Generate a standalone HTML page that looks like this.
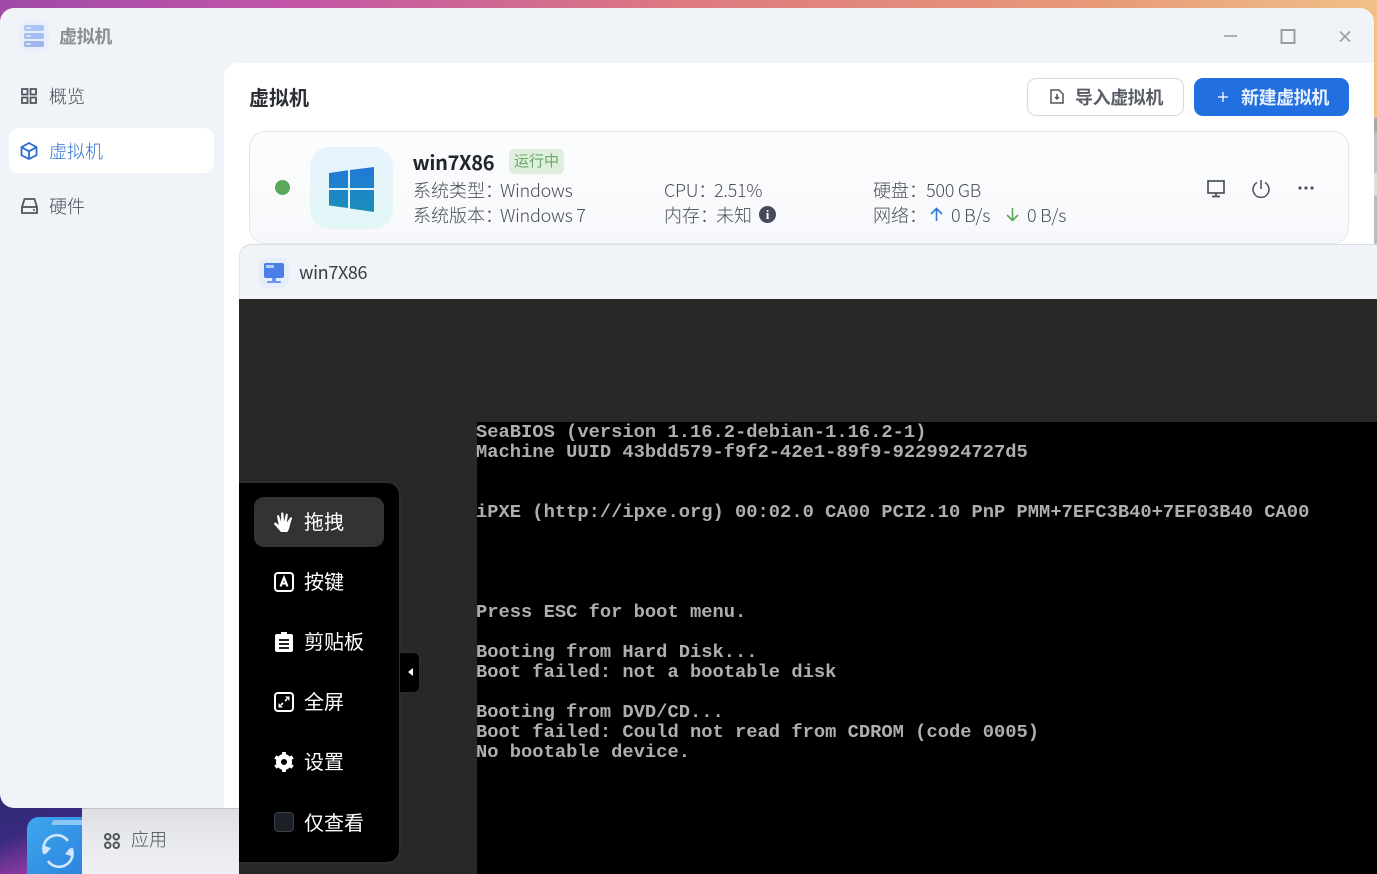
<!DOCTYPE html>
<html><head><meta charset="utf-8"><style>
*{box-sizing:border-box;margin:0;padding:0}
html,body{width:1377px;height:874px;overflow:hidden}
body{position:relative;font-family:"Noto Sans CJK SC","Liberation Sans",sans-serif;background:#eef0f5}
.a{position:absolute;white-space:nowrap}
.wall{left:0;top:0;width:1377px;height:874px;background:linear-gradient(90deg,#a04aa8 0,#c055a8 20%,#dd7a80 50%,#e89a78 80%,#f0c088 100%)}
.win{left:0;top:8px;width:1374px;height:800px;background:#f0f3f8;border-radius:14px}
.main{left:224px;top:63px;width:1150px;height:745px;background:#fff;border-radius:14px 0 0 0}
.t{font-size:18px;line-height:24px;color:#4a4f57;font-weight:300;margin-top:1px;letter-spacing:-.25px}
.card{left:249px;top:131px;width:1100px;height:113px;border:1px solid #e3e6ec;border-radius:16px;background:linear-gradient(#fbfcfe,#f9fafc 75%,#f6f7fa)}
.mono{font-family:"Liberation Mono",monospace;font-size:18.77px;line-height:20px;color:#aeaeae;font-weight:bold;left:476px;margin-top:1px}
.m{font-size:20px;line-height:28px;color:#fff;left:304px;margin-top:1px;font-family:"Liberation Sans","Noto Sans CJK SC",sans-serif}
.b{font-size:18px;line-height:24px;font-weight:bold;letter-spacing:-.4px;font-family:"Liberation Sans","Noto Sans CJK SC",sans-serif}
svg{position:absolute;overflow:visible}
</style></head><body>
<div class="a wall"></div>
<div class="a" style="left:1374px;top:118px;width:3px;height:126px;background:linear-gradient(#a8a8a8 0,#a8a8a8 11%,#bcc0c8 12%,#bcc0c8 43%,#e0e0e0 44%,#e0e0e0 61%,#b8bcc4 62%)"></div>
<!-- desktop bottom-left -->
<div class="a" style="left:0;top:790px;width:82px;height:84px;background:linear-gradient(160deg,#2a2a70 0,#3a2a80 45%,#8a3aa0 80%,#a040a8 100%)"></div>
<div class="a" style="left:27px;top:817px;width:60px;height:60px;background:linear-gradient(135deg,#3fa8ee,#2b80dc);border-radius:12px 0 0 0"></div>
<div class="a" style="left:52px;top:820px;width:30px;height:5px;background:#8cc6f2;border-radius:3px 0 0 0"></div>
<svg style="left:42px;top:835px" width="32" height="32" viewBox="0 0 32 32" fill="none" stroke="#cfe6fb" stroke-width="2.600"><path d="M2.500 19A13.500 13.500 0 0 1 26 6"/><path d="M29.500 13A13.500 13.500 0 0 1 6 26"/><path d="M0 10l4 9 5-6z" fill="#cfe6fb" stroke="none"/><path d="M32 22l-4-9-5 6z" fill="#cfe6fb" stroke="none"/></svg>
<div class="a" style="left:82px;top:808px;width:158px;height:66px;background:linear-gradient(#dcdee3,#e8eaef 50%,#eef0f5);border-top:1px solid #bfc1c6"></div>
<svg style="left:104px;top:833px" width="16" height="16" viewBox="0 0 16 16" fill="none" stroke="#50545c" stroke-width="2"><rect x="1" y="1" width="5.500" height="5.500" rx="2.700"/><rect x="9.500" y="1" width="5.500" height="5.500" rx="2.700"/><rect x="1" y="9.500" width="5.500" height="5.500" rx="2.700"/><rect x="9.500" y="9.500" width="5.500" height="5.500" rx="2.700"/></svg>
<div class="a t" style="left:131px;top:826px;color:#50545c;letter-spacing:0">应用</div>

<div class="a win"></div>
<!-- header -->
<div class="a" style="left:19px;top:21px;width:30px;height:30px;background:#e9effa;border-radius:8px"></div>
<div class="a" style="left:24px;top:25px;width:20px;height:6px;background:#a9c4f5;border-radius:2px"></div>
<div class="a" style="left:24px;top:33px;width:20px;height:6px;background:#a4bcf2;border-radius:2px"></div>
<div class="a" style="left:24px;top:41px;width:20px;height:6px;background:#a0b4ee;border-radius:2px"></div>
<div class="a" style="left:26px;top:27px;width:5px;height:2px;background:#cfe3f5"></div>
<div class="a" style="left:26px;top:35px;width:5px;height:2px;background:#cfe3f5"></div>
<div class="a" style="left:26px;top:43px;width:5px;height:2px;background:#cfe3f5"></div>
<div class="a b" style="left:59px;top:25px;color:#8a8d92;letter-spacing:-.3px">虚拟机</div>
<svg style="left:1223px;top:29px" width="130" height="16" viewBox="0 0 130 16" fill="none" stroke="#9a9da3" stroke-width="1.600"><path d="M1 7h13"/><rect x="58.500" y="1" width="13" height="13" stroke-width="2"/><path d="M117 2.500l10 10M127 2.500l-10 10"/></svg>
<!-- sidebar -->
<svg style="left:21px;top:88px" width="16" height="16" viewBox="0 0 16 16" fill="none" stroke="#55585f" stroke-width="1.800"><rect x="1" y="1" width="5.500" height="5.500"/><rect x="9.500" y="1" width="5.500" height="5.500"/><rect x="1" y="9.500" width="5.500" height="5.500"/><rect x="9.500" y="9.500" width="5.500" height="5.500"/></svg>
<div class="a t" style="left:49px;top:83px;letter-spacing:0">概览</div>
<div class="a" style="left:9px;top:128px;width:205px;height:45px;background:#fff;border-radius:10px"></div>
<svg style="left:20px;top:142px" width="18" height="18" viewBox="0 0 18 18" fill="none" stroke="#2a6fd0" stroke-width="1.800"><path d="M9 1l7.500 4.200v8L9 17l-7.500-3.800v-8z"/><path d="M1.500 5.200L9 9.300l7.500-4.100M9 9.300V17"/></svg>
<div class="a t" style="left:49px;top:138px;color:#2f74d0;letter-spacing:0">虚拟机</div>
<svg style="left:21px;top:198px" width="17" height="16" viewBox="0 0 17 16" fill="none" stroke="#50545c" stroke-width="1.800"><path d="M1 9L3.500 1h10L16 9v6H1z"/><path d="M1 9h15"/><path d="M12 12h2" stroke-width="1.500"/></svg>
<div class="a t" style="left:49px;top:193px;letter-spacing:0">硬件</div>
<!-- main -->
<div class="a main"></div>
<div class="a" style="left:249px;top:87px;font-size:20px;line-height:24px;font-weight:bold;color:#2b2e33;font-family:'Liberation Sans','Noto Sans CJK SC',sans-serif">虚拟机</div>
<div class="a" style="left:1027px;top:78px;width:157px;height:38px;border:1px solid #d5d9e0;border-radius:9px;background:#fff"></div>
<svg style="left:1050px;top:89px" width="14" height="16" viewBox="0 0 14 16" fill="none" stroke="#50545c" stroke-width="1.500"><path d="M1 1h8l4 4v9H1z"/><path d="M7 5v5M5 8l2 2 2-2"/></svg>
<div class="a b" style="left:1075px;top:86px;color:#5a5e66">导入虚拟机</div>
<div class="a" style="left:1194px;top:78px;width:155px;height:38px;border-radius:9px;background:#2270e0"></div>
<svg style="left:1217px;top:91px" width="12" height="12" viewBox="0 0 12 12" stroke="#fff" stroke-width="1.300"><path d="M6 1v10M1 6h10"/></svg>
<div class="a b" style="left:1241px;top:86px;color:#e8f0fc">新建虚拟机</div>
<!-- card -->
<div class="a card"></div>
<div class="a" style="left:275px;top:180px;width:15px;height:15px;border-radius:50%;background:#5aa85a"></div>
<div class="a" style="left:310px;top:147px;width:83px;height:82px;border-radius:20px;background:linear-gradient(#e8f3fd,#e2f7f6)"></div>
<svg style="left:329px;top:167px" width="46" height="45" viewBox="0 0 46 45"><defs><linearGradient id="w" x1="0" y1="0" x2="0" y2="1"><stop offset="0" stop-color="#2278da"/><stop offset="1" stop-color="#1a90b8"/></linearGradient></defs><path d="M0 6l19-2.800V21H0zM21 3L45 0v21H21zM0 23h19v18L0 38.500zM21 23h24v22l-24-3.500z" fill="url(#w)"/></svg>
<div class="a" style="left:412.500px;top:149px;font-size:20px;line-height:26px;font-weight:bold;color:#22252a;font-family:'Noto Sans CJK SC',sans-serif;letter-spacing:-.35px">win7X86</div>
<div class="a" style="left:509px;top:149px;width:55px;height:25px;border-radius:5px;background:#e0eedd;color:#66a866;font-size:15px;line-height:25px;text-align:center;font-family:'Liberation Sans','Noto Sans CJK SC',sans-serif">运行中</div>
<div class="a t" style="left:413px;top:177px;letter-spacing:0">系统类型：</div><div class="a t" style="left:500px;top:177px">Windows</div>
<div class="a t" style="left:413px;top:202px;letter-spacing:0">系统版本：</div><div class="a t" style="left:500px;top:202px">Windows 7</div>
<div class="a t" style="left:664px;top:177px">CPU：</div><div class="a t" style="left:714px;top:177px">2.51%</div>
<div class="a t" style="left:664px;top:202px;letter-spacing:0">内存：</div><div class="a t" style="left:716px;top:202px;letter-spacing:0">未知</div>
<div class="a" style="left:759px;top:206px;width:17px;height:17px;border-radius:50%;background:#454b5a;color:#fff;font-size:13px;line-height:17px;text-align:center;font-weight:bold;font-family:'Liberation Serif',serif">i</div>
<div class="a t" style="left:873px;top:177px;letter-spacing:0">硬盘：</div><div class="a t" style="left:926px;top:177px">500 GB</div>
<div class="a t" style="left:873px;top:202px;letter-spacing:0">网络：</div>
<svg style="left:929px;top:207px" width="15" height="15" viewBox="0 0 15 15" fill="none" stroke="#2a78d8" stroke-width="1.600"><path d="M7.500 14V2M2 7l5.500-5.500L13 7"/></svg>
<div class="a t" style="left:951px;top:202px">0 B/s</div>
<svg style="left:1005px;top:207px" width="15" height="15" viewBox="0 0 15 15" fill="none" stroke="#5aa85a" stroke-width="1.600"><path d="M7.500 1v12M2 8l5.500 5.500L13 8"/></svg>
<div class="a t" style="left:1027px;top:202px">0 B/s</div>
<svg style="left:1207px;top:180px" width="18" height="18" viewBox="0 0 18 18" fill="none" stroke="#4d5159" stroke-width="1.700"><rect x="1" y="1" width="16" height="12"/><path d="M9 13v3M5 16.500h8"/></svg>
<svg style="left:1252px;top:179px" width="18" height="19" viewBox="0 0 18 19" fill="none" stroke="#4d5159" stroke-width="1.500"><path d="M9 1v9M5 3.500a8 8 0 1 0 8 0"/></svg>
<svg style="left:1298px;top:186px" width="16" height="4" viewBox="0 0 16 4" fill="#4d5159"><circle cx="2" cy="2" r="1.600"/><circle cx="8" cy="2" r="1.600"/><circle cx="14" cy="2" r="1.600"/></svg>
<!-- console window -->
<div class="a" style="left:239px;top:244px;width:1138px;height:630px;background:#f0f3f8;border-top:1px solid #d8dbe2;border-left:1px solid #e0e3e8;border-radius:12px 0 0 0"></div>
<div class="a" style="left:259px;top:258px;width:30px;height:30px;border-radius:8px;background:#e5ecfa"></div>
<div class="a" style="left:264px;top:263px;width:20px;height:15px;background:#4a7fe8;border-radius:2px"></div>
<div class="a" style="left:266px;top:265px;width:8px;height:3px;background:#b8d0f8"></div>
<div class="a" style="left:272px;top:278px;width:4px;height:3px;background:#6a94f0"></div>
<div class="a" style="left:267px;top:281px;width:14px;height:2px;background:#6a94f0;border-radius:1px"></div>
<div class="a" style="left:299px;top:260px;font-size:18px;line-height:24px;color:#3a3d44;font-family:'Noto Sans CJK SC',sans-serif;letter-spacing:-.35px">win7X86</div>
<div class="a" style="left:239px;top:299px;width:1138px;height:575px;background:#282828"></div>
<div class="a" style="left:477px;top:422px;width:900px;height:452px;background:#000"></div>
<div class="a mono" style="top:421px">SeaBIOS (version 1.16.2-debian-1.16.2-1)</div>
<div class="a mono" style="top:441px">Machine UUID 43bdd579-f9f2-42e1-89f9-9229924727d5</div>
<div class="a mono" style="top:501px">iPXE (http://ipxe.org) 00:02.0 CA00 PCI2.10 PnP PMM+7EFC3B40+7EF03B40 CA00</div>
<div class="a mono" style="top:601px">Press ESC for boot menu.</div>
<div class="a mono" style="top:641px">Booting from Hard Disk...</div>
<div class="a mono" style="top:661px">Boot failed: not a bootable disk</div>
<div class="a mono" style="top:701px">Booting from DVD/CD...</div>
<div class="a mono" style="top:721px">Boot failed: Could not read from CDROM (code 0005)</div>
<div class="a mono" style="top:741px">No bootable device.</div>
<!-- toolbar -->
<div class="a" style="left:239px;top:481px;width:162px;height:383px;background:#000;border:2px solid #2e2e2e;border-left:0;border-radius:0 14px 14px 0"></div>
<div class="a" style="left:254px;top:497px;width:130px;height:50px;background:#333;border-radius:10px"></div>
<div class="a" style="left:400px;top:652px;width:20px;height:41px;background:#000;border:1px solid #2e2e2e;border-left:0;border-radius:0 6px 6px 0"></div>
<div class="a" style="left:408px;top:668px;width:0;height:0;border:4px solid transparent;border-right:5px solid #fff;border-left:0"></div>
<svg style="left:274px;top:512px" width="19" height="20" viewBox="0 0 19 20" fill="#fff"><path d="M7 20C5 18 2.500 14.500 .3 12.500c-.8-1 .5-2.500 2-1.500L4.800 13 3 4.500C2.800 3 4.700 2.500 5.200 4L7 9.500 7.200 1.500C7.300 0 9.300 0 9.400 1.500L10 9.500 11.800 2.500C12.200 1 14 1.500 13.800 3L12.800 10.500 16.200 5.800C17 4.600 18.600 5.500 18 6.800 16 11 16 16 13.500 20z"/></svg>
<div class="a m" style="top:508px">拖拽</div>
<svg style="left:274px;top:572px" width="20" height="20" viewBox="0 0 20 20" fill="none" stroke="#fff" stroke-width="2"><rect x="1" y="1" width="18" height="18" rx="3"/><path d="M6.500 14.500L10 5.500l3.500 9M7.500 11.500h5" stroke-width="2"/></svg>
<div class="a m" style="top:568px">按键</div>
<svg style="left:275px;top:632px" width="18" height="20" viewBox="0 0 18 20"><path fill="#fff" d="M6 0h6v2h4a2 2 0 0 1 2 2v14a2 2 0 0 1-2 2H2a2 2 0 0 1-2-2V4a2 2 0 0 1 2-2h4z"/><path stroke="#000" stroke-width="1.800" d="M4 8h10M4 12h10M4 16h10"/></svg>
<div class="a m" style="top:628px">剪贴板</div>
<svg style="left:274px;top:692px" width="20" height="20" viewBox="0 0 20 20" fill="none" stroke="#fff" stroke-width="2"><rect x="1" y="1" width="18" height="18" rx="3"/><path d="M11 4.500h4.500V9zM9 15.500H4.500V11z" fill="#fff" stroke="none"/><path d="M13 7l-2 2M7 13l2-2" stroke-width="1.600"/></svg>
<div class="a m" style="top:688px">全屏</div>
<svg style="left:274px;top:752px" width="20" height="20" viewBox="0 0 20 20"><circle cx="10" cy="10" r="5.500" fill="none" stroke="#fff" stroke-width="5"/><g stroke="#fff" stroke-width="3.800"><path d="M10 0v4M10 16v4M1.300 5l3.500 2M15.200 13l3.500 2M1.300 15l3.500-2M15.200 7l3.500-2"/></g></svg>
<div class="a m" style="top:748px">设置</div>
<div class="a" style="left:274px;top:812px;width:20px;height:20px;background:#1b1f26;border:1px solid #3a3e46;border-radius:4px"></div>
<div class="a m" style="top:809px">仅查看</div>
</body></html>
